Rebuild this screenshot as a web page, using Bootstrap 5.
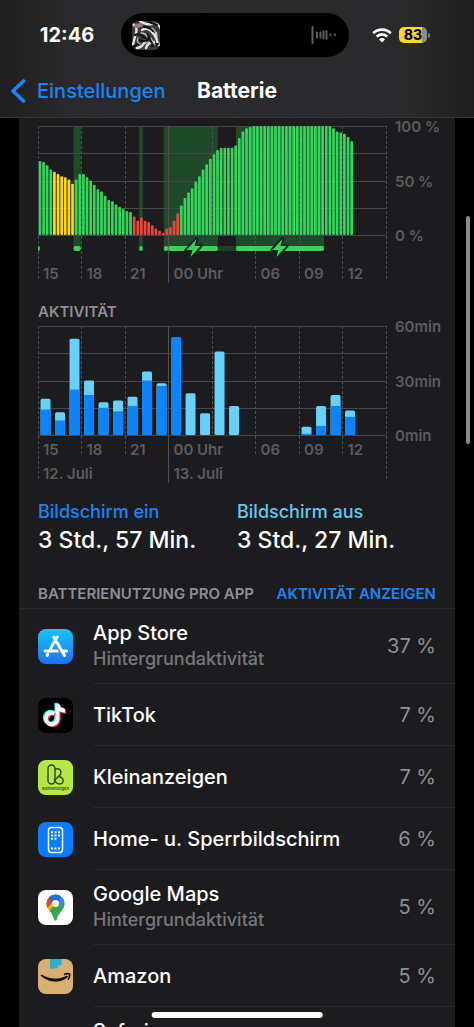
<!DOCTYPE html>
<html lang="de" data-bs-theme="dark">
<head>
<meta charset="utf-8">
<meta name="viewport" content="width=device-width, initial-scale=1">
<title>Batterie</title>
<link href="https://cdn.jsdelivr.net/npm/bootstrap@5.3.0/dist/css/bootstrap.min.css" rel="stylesheet">
<style>
  body { background: #000; color: #fff; font-family: Inter, "Liberation Sans", sans-serif; font-size: 20px; line-height: 26px; }
  .topbar { background: linear-gradient(90deg, #1f1f20, #29292b 14%, #2a2a2c 50%, #29292b 86%, #1f1f20); border-bottom: 1px solid #363638; padding-top: 13px; }
  .status { display: grid; grid-template-columns: 1fr 228px 1fr; padding-right: 4px; }
  .clock { font-weight: 700; padding-left: 13px; }
  .island { background: #000; border-radius: 22px; height: 44px; padding: 0 12px 0 11px; }
  .radio-icons { padding-left: 23px; gap: 7px; }
  .batt { width: 28px; height: 16px; border-radius: 5px; background: linear-gradient(90deg, #f6da1b 83%, #8c8c90 83%); color: #000; font-size: 14px; line-height: 16px; font-weight: 800; }
  .batt-cap { width: 2px; height: 5px; border-radius: 0 2px 2px 0; background: #77777b; margin-left: 1px; }
  .titlebar { display: grid; grid-template-columns: 1fr auto 1fr; height: 52px; margin-top: 8px; padding: 0 10px; }
  .titlebar a { color: #1685f8; gap: 11px; font-weight: 500; }
  .titlebar h1 { font-size: 21px; font-weight: 700; }
  .panel { background: #1c1c1e; margin: 0 19px; }
  .charts { padding: 8px 19px 0; }
  .plot-col { min-width: 0; }
  .plot-svg { display: block; width: 100%; height: 109px; overflow: visible; }
  .plot-svg line { shape-rendering: crispEdges; }
  .axis { flex: 0 0 50px; min-width: 0; height: 129px; margin-top: -9px; padding-left: 9px; white-space: nowrap; }
  .axis, .ticks { color: #5b5b5f; font-size: 15px; line-height: 20px; font-weight: 600; }
  .ticks { display: grid; grid-template-columns: repeat(8, 1fr); white-space: nowrap; }
  .ticks span { padding-left: 5px; width: 0; }
  .ticks-power { margin-top: 29px; }
  .ticks-use { margin-top: 5px; }
  .ticks-day { margin-top: 4px; grid-template-columns: 3fr 5fr; }
  .caps { font-size: 15px; line-height: 20px; font-weight: 600; color: #8e8e93; margin: 0; }
  .caps-act { margin: 18px 0 4px; }
  .totals { padding: 16px 19px 28px; }
  .totals dt { font-weight: 500; font-size: 18px; line-height: 24px; }
  .totals dd { font-weight: 500; font-size: 23px; line-height: 32px; margin: 0; }
  .c-on { color: #1685f8; } .c-off { color: #64c8f0; }
  .usage-head { padding: 0 19px 4px; border-bottom: 1px solid #29292b; white-space: nowrap; }
  .usage-head button { color: #1685f8; }
  .app-row { padding-left: 19px; gap: 20px; }
  .app-row svg { width: 35px; height: 35px; flex: none; }
  .app-body { min-height: 62px; padding: 11px 19px 11px 0; border-bottom: 1px solid #29292b; font-weight: 500; }
  .app-tall { min-height: 75px; }
  .app-body small { display: block; font-size: 18px; font-weight: 500; color: #77777b; }
  .app-body .pct { font-size: 20px; font-weight: 400; color: #8e8e93; }
  .scroll-thumb { top: 216px; right: 4px; width: 4px; height: 228px; border-radius: 2px; background: #8a8a8c; }
  .home-bar { bottom: 9px; left: 50%; width: 36%; height: 6px; border-radius: 3px; background: #fff; transform: translateX(-50%); }
</style>
</head>
<body class="vh-100 overflow-hidden d-flex flex-column position-relative">

<header class="topbar flex-shrink-0">
  <div class="status align-items-center">
    <div class="clock text-center">12:46</div>
    <div class="island d-flex align-items-center justify-content-between">
      <svg width="28" height="29" viewBox="0 0 28 29" aria-hidden="true">
        <defs><clipPath id="art"><rect width="28" height="29" rx="6"/></clipPath></defs>
        <g clip-path="url(#art)" fill="none" stroke-linecap="round">
          <rect width="28" height="29" fill="#3a3a3b"/>
          <path d="M0 3q6 2 4 9t-3 12M8 0q5 4 12 3t9 5M10 9q5-3 9 1t6 9M5 27q6-1 8-7M14 27q2-6 8-6M24 12q0 8 3 12" stroke="#e3e3e3" stroke-width="2.4"/>
          <path d="M3 14q4-2 7 1t7 1M8 19q3 3 9-1M12 6q5 0 9 4M17 1l8 3M0 26l6-3M20 25l6-2M15 13l5 9" stroke="#111" stroke-width="2"/>
          <path d="M9 12q5 0 6 4M6 17q-2 4 2 6M20 7q4 3 5 8M12 23l5-2M19 17l4 7" stroke="#b9b9bb" stroke-width="1.3"/>
          <path d="M4 5l5-1" stroke="#a2777b" stroke-width="4"/>
        </g>
      </svg>
      <svg width="26" height="20" viewBox="0 0 26 20" aria-hidden="true" stroke="#5d5d60" stroke-width="2" stroke-linecap="round">
        <path d="M1.500 2v16M6 7.500v5M9.500 7.500v5M12.500 6.500v7M15.500 6v8M19.500 9.500v.5M24 9.500v.5"/>
      </svg>
    </div>
    <div class="radio-icons d-flex align-items-center">
      <svg width="20" height="15" viewBox="0 0 20 15" aria-label="WLAN" role="img" fill="none" stroke="#fff" stroke-width="2.700">
        <path d="M1.200 5.200a12.500 12.500 0 0 1 17.600 0M4.700 8.600a7.500 7.500 0 0 1 10.600 0"/><path d="M10 14.500l-3-3a4.300 4.300 0 0 1 6 0z" fill="#fff" stroke="none"/>
      </svg>
      <div class="d-flex align-items-center"><span class="batt text-center">83</span><span class="batt-cap"></span></div>
    </div>
  </div>
  <nav class="titlebar align-items-center">
    <a href="#" class="d-flex align-items-center text-decoration-none">
      <svg width="16" height="24" viewBox="0 0 16 24" fill="none" stroke="currentColor" stroke-width="3.600" stroke-linecap="round" stroke-linejoin="round" aria-hidden="true"><path d="M13.500 2L3 12l10.500 10"/></svg>
      <span>Einstellungen</span>
    </a>
    <h1 class="m-0">Batterie</h1>
  </nav>
</header>

<main class="flex-fill overflow-hidden">
  <div class="panel">
    <section class="charts">
      <div class="d-flex">
        <div class="plot-col flex-fill">
          <svg class="plot-svg" id="power" role="img" aria-label="Batterieladung"></svg>
          <div class="ticks ticks-power"><span>15</span><span>18</span><span>21</span><span>00 Uhr</span><span></span><span>06</span><span>09</span><span>12</span></div>
        </div>
        <div class="axis d-flex flex-column justify-content-between"><span>100 %</span><span>50 %</span><span>0 %</span></div>
      </div>
      <h2 class="caps caps-act">AKTIVITÄT</h2>
      <div class="d-flex">
        <div class="plot-col flex-fill">
          <svg class="plot-svg" id="use" role="img" aria-label="Aktivität"></svg>
          <div class="ticks ticks-use"><span>15</span><span>18</span><span>21</span><span>00 Uhr</span><span></span><span>06</span><span>09</span><span>12</span></div>
          <div class="ticks ticks-day"><span>12. Juli</span><span>13. Juli</span></div>
        </div>
        <div class="axis d-flex flex-column justify-content-between"><span>60min</span><span>30min</span><span>0min</span></div>
      </div>
    </section>

    <dl class="totals row g-0 m-0">
      <div class="col-6"><dt class="c-on">Bildschirm ein</dt><dd>3 Std., 57 Min.</dd></div>
      <div class="col-6"><dt class="c-off">Bildschirm aus</dt><dd>3 Std., 27 Min.</dd></div>
    </dl>

    <div class="usage-head d-flex justify-content-between">
      <h2 class="caps">BATTERIENUTZUNG PRO APP</h2>
      <button type="button" class="caps border-0 bg-transparent p-0">AKTIVITÄT ANZEIGEN</button>
    </div>

    <ul class="list-unstyled m-0">
      <li class="app-row d-flex align-items-center">
        <svg viewBox="0 0 35 35" aria-hidden="true">
          <defs><linearGradient id="as" x2="0" y2="1"><stop stop-color="#1ac4fb"/><stop offset="1" stop-color="#1d6ff2"/></linearGradient></defs>
          <rect width="35" height="35" rx="8" fill="url(#as)"/>
          <g stroke="#fff" stroke-width="3" stroke-linecap="round" fill="none"><path d="M19.300 8L11.500 21.500M15.800 8l10.700 18.500M7 22h12.500M25 22h3.500M9.800 25.200l-.7 1.300"/></g>
          <path d="M16.500 14l5.500 10" stroke="#1e93f7" stroke-width=".7"/>
        </svg>
        <div class="app-body app-tall d-flex flex-fill align-items-center justify-content-between"><div>App Store<small>Hintergrundaktivität</small></div><span class="pct">37 %</span></div>
      </li>
      <li class="app-row d-flex align-items-center">
        <svg viewBox="0 0 35 35" aria-hidden="true">
          <rect width="35" height="35" rx="8" fill="#000"/>
          <g fill="none" stroke-width="3.900"><path d="M16.500 15.500a5.800 5.800 0 1 0 3 5.200V6c.3 4 3.200 6.500 7.500 6.800" stroke="#25f4ee" transform="translate(-1.200 -1)"/>
          <path d="M16.500 15.500a5.800 5.800 0 1 0 3 5.200V6c.3 4 3.200 6.500 7.500 6.800" stroke="#fe2c55" transform="translate(1.200 1)"/>
          <path d="M16.500 15.500a5.800 5.800 0 1 0 3 5.200V6c.3 4 3.200 6.500 7.500 6.800" stroke="#fff"/></g>
        </svg>
        <div class="app-body d-flex flex-fill align-items-center justify-content-between"><div>TikTok</div><span class="pct">7 %</span></div>
      </li>
      <li class="app-row d-flex align-items-center">
        <svg viewBox="0 0 35 35" aria-hidden="true">
          <rect width="35" height="35" rx="8" fill="#b5e941"/>
          <g fill="none" stroke="#27491a" stroke-width="1.400"><rect x="10" y="5" width="7" height="19" rx="3.500"/><path d="M17 9.200c3-1.200 6 .2 6 3.300 0 1.500-1 2.800-2.500 3.800L17 20M19.500 17c2.500-1 5.700.7 5.700 3.600 0 2-1.500 3.400-3.600 3.400-3 0-4.600-2.500-5.600-5"/></g>
          <text x="17.500" y="30" text-anchor="middle" font-size="4" font-weight="600" fill="#27491a">kleinanzeigen</text>
        </svg>
        <div class="app-body d-flex flex-fill align-items-center justify-content-between"><div>Kleinanzeigen</div><span class="pct">7 %</span></div>
      </li>
      <li class="app-row d-flex align-items-center">
        <svg viewBox="0 0 35 35" aria-hidden="true">
          <rect width="35" height="35" rx="8" fill="#0a7cff"/>
          <rect x="10.500" y="5.500" width="14" height="25" rx="3" fill="none" stroke="#fff" stroke-width="1.500"/>
          <path d="M13 10.200h9.500M13 13.500h9.500M13 16.800h6M13 26.500h9.500" stroke="#fff" stroke-width="2" stroke-dasharray="2 1.500"/>
        </svg>
        <div class="app-body d-flex flex-fill align-items-center justify-content-between"><div>Home- u. Sperrbildschirm</div><span class="pct">6 %</span></div>
      </li>
      <li class="app-row d-flex align-items-center">
        <svg viewBox="0 0 35 35" aria-hidden="true">
          <defs><clipPath id="pin"><path d="M17.500 4.500a9 9 0 0 1 9 9c0 6.500-6.500 9-7.500 15.500-.3 2-2.700 2-3 0C15 22.500 8.500 20 8.500 13.500a9 9 0 0 1 9-9z"/></clipPath></defs>
          <rect width="35" height="35" rx="8" fill="#fff"/>
          <g clip-path="url(#pin)"><rect width="35" height="35" fill="#34a853"/><path d="M5 22l6-1L26 3H5z" fill="#fbbc04"/><path d="M17.500 13.500L9 23 7 21l7-8z" fill="#fbbc04"/><path d="M5 18l4.500 0L17.500 9 11 3H5z" fill="#ea4335"/><path d="M10.500 7.500l7 6L28 2H13z" fill="#1a73e8"/><path d="M17.500 13.500L25 5l4 7-10 4z" fill="#4285f4"/><path d="M26.500 11v9L12 30l3-8z" fill="#34a853"/></g>
          <circle cx="17.500" cy="13.500" r="3.500" fill="#fff"/>
        </svg>
        <div class="app-body app-tall d-flex flex-fill align-items-center justify-content-between"><div>Google Maps<small>Hintergrundaktivität</small></div><span class="pct">5 %</span></div>
      </li>
      <li class="app-row d-flex align-items-center">
        <svg viewBox="0 0 35 35" aria-hidden="true">
          <rect width="35" height="35" rx="8" fill="#d9b072"/>
          <path d="M12 0h11.500v6l-3 .5-1 3-2-.8-2 1.300-3.500-.8z" fill="#26b1d8"/>
          <path d="M3 16.500c8 7 19 7.500 26.500 1.500l-.6-1C21 21.500 12 21 3.500 16z" fill="#16120d" stroke="#16120d"/>
          <path d="M26 15.500c2-1 4-1 5.700-.5.200 2-.4 4-1.700 5.700" fill="none" stroke="#16120d" stroke-width="1.600"/>
        </svg>
        <div class="app-body d-flex flex-fill align-items-center justify-content-between"><div>Amazon</div><span class="pct">5 %</span></div>
      </li>
      <li class="app-row d-flex align-items-center">
        <svg viewBox="0 0 35 35" aria-hidden="true"><circle cx="17.500" cy="17.500" r="14" fill="#1d8cf5"/><path d="M26 9l-6.500 10.500-4-4z" fill="#f33"/><path d="M9 26l6.500-10.500 4 4z" fill="#fff"/></svg>
        <div class="app-body app-tall d-flex flex-fill align-items-start"><div>Safari</div></div>
      </li>
    </ul>
  </div>
</main>

<div class="scroll-thumb position-absolute"></div>
<div class="home-bar position-absolute"></div>

<script src="https://cdn.jsdelivr.net/npm/bootstrap@5.3.0/dist/js/bootstrap.bundle.min.js"></script>
<script>
  const H = 109;
  const el = (svg, name, attrs) => {
    const n = document.createElementNS('http://www.w3.org/2000/svg', name);
    for (const k in attrs) n.setAttribute(k, attrs[k]);
    svg.appendChild(n);
    return n;
  };
  const quarter = q => (q / 96 * 100) + '%';
  const rows = svg => {
    for (let i = 0; i <= 4; i++) {
      const y = Math.round(H * i / 4) + .5;
      el(svg, 'line', { x1: 0, x2: '100%', y1: y, y2: y, stroke: '#47474a' });
    }
  };
  // one vertical line every three hours; midnight is solid
  const cols = (svg, ends) => ends.forEach((end, i) =>
    el(svg, 'line', { x1: quarter(i * 12), x2: quarter(i * 12), y1: 0, y2: end, stroke: '#505053', 'stroke-dasharray': i === 3 ? 'none' : '3 2' }));

  // charge level in percent, one value per quarter of an hour
  const level = [68, 67, 64, 60, 58, 56, 54, 53, 51, 47, 51, 56, 56, 53, 50, 46, 42, 40, 36, 32, 31, 28, 26, 24, 22, 21,
    17, 13, 16, 13, 12, 9, 6, 4, 2, 6, 7, 13, 20, 27, 34, 39, 43, 49, 54, 60, 65, 70, 74, 78, 80, 80, 80, 80, 82, 89, 95, 98, 99,
    ...Array(22).fill(100), 98, 95, 94, 93, 90, 86];
  const charging = [[9.8, 11.8], [27.9, 28.9], [34.7, 49.6], [54.6, 78.9]];
  const power = document.getElementById('power');
  charging.forEach(([a, b]) => el(power, 'rect', { x: quarter(a), width: quarter(b - a), y: 0, height: 121, fill: '#1f4a2a' }));
  rows(power);
  level.forEach((v, i) => {
    const color = i >= 4 && i <= 9 ? '#fcd81c' : i >= 26 && i <= 38 ? '#f2433a' : '#33d65b';
    el(power, 'rect', { x: quarter(i + .15), width: quarter(.75), y: H - v * H / 100, height: v * H / 100, rx: 1, fill: color });
  });
  cols(power, [155, 155, 155, 157, 109, 155, 155, 155, 155]);
  el(power, 'rect', { x: quarter(49), width: quarter(6), y: 120, height: 5, fill: '#1f3d27' });
  [[0, .5], [9.8, 11.8], [27.9, 28.9], [34.7, 35.9], [36, 49.6], [54.6, 78.9]].forEach(([a, b]) =>
    el(power, 'rect', { x: quarter(a), width: quarter(b - a), y: 120, height: 5, rx: 2, fill: '#33d65b' }));
  [42.9, 66.6].forEach(q => {
    const s = el(power, 'svg', { x: quarter(q), y: 122, overflow: 'visible' });
    el(s, 'path', { d: 'M3 -9L-7 2H-1L-3 9L7 -2H1Z', fill: '#33d65b', stroke: '#102616', 'stroke-width': 4, 'paint-order': 'stroke', 'stroke-linejoin': 'round' });
  });

  // minutes per hour: [total, screen on]
  const minutes = [[20, 14], [12.5, 8], [53, 25], [30, 22], [18, 15], [19, 13], [21, 16], [35, 30], [28.5, 27], [54, 54],
    [23, 0], [12, 0], [46, 0], [16, 0], null, null, null, null, [4.5, .7], [16, 5], [22, 16], [13.5, 10]];
  const use = document.getElementById('use');
  rows(use);
  cols(use, [155, 130, 130, 157, 109, 130, 130, 130, 155]);
  minutes.forEach((m, i) => {
    if (!m) return;
    const t = m[0] * H / 60, on = m[1] * H / 60, x = quarter(i * 4 + .7), w = quarter(2.75);
    el(use, 'rect', { x, width: w, y: H - t, height: t, rx: 1.5, fill: m[0] === m[1] ? '#0a84ff' : '#64d2ff' });
    if (on && on < t) el(use, 'rect', { x, width: w, y: H - on, height: on, fill: '#0a84ff' });
  });
</script>
</body>
</html>
